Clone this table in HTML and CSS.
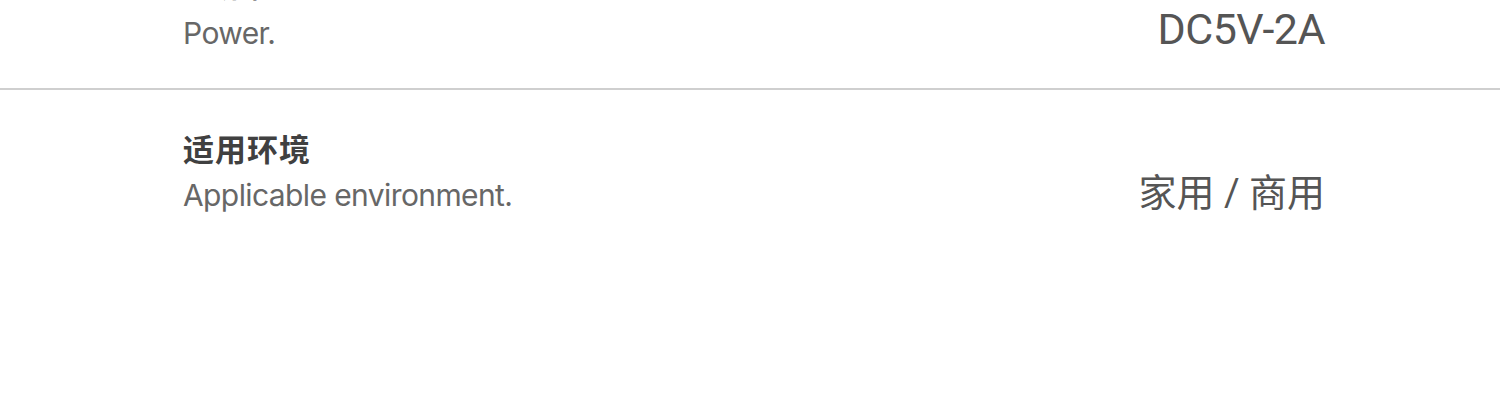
FILE: index.html
```html
<!DOCTYPE html>
<html lang="zh-CN">
<head>
  <meta charset="UTF-8">
  <title>产品参数</title>
  <meta name="viewport" content="width=device-width, initial-scale=1.0">
  <link rel="stylesheet" href="styles.css">
</head>
<body>
  <div class="specs">
    <div class="spec-row">
      <div class="spec-title">电源输入</div>
      <div class="spec-sub">Power.</div>
      <div class="spec-value">DC5V-2A</div>
    </div>
    <div class="spec-row">
      <div class="spec-title">适用环境</div>
      <div class="spec-sub">Applicable environment.</div>
      <div class="spec-value cn">家用 / 商用</div>
    </div>
  </div>
</body>
</html>
```

FILE: styles.css
```css
body {
  margin: 0;
  background: #fff;
  font-family: Inter, "Noto Sans CJK SC", sans-serif;
  overflow: hidden;
}

.specs {
  margin-top: -74px;
}

.spec-row {
  display: grid;
  grid-template-columns: 1fr auto;
  row-gap: 9px;
  align-items: baseline;
  padding: 40px 175px 37px 183px;
  border-bottom: 2px solid #cfcfcf;
}

.spec-row:last-child {
  border-bottom: none;
}

.spec-title {
  grid-column: 1;
  font-family: "Noto Sans CJK SC", sans-serif;
  font-size: 31px;
  line-height: 36px;
  font-weight: 700;
  color: #404040;
  letter-spacing: 1px;
}

.spec-sub {
  grid-column: 1;
  grid-row: 2;
  font-size: 30px;
  line-height: 36px;
  color: #676767;
  letter-spacing: -0.6px;
}

.spec-value {
  grid-column: 2;
  grid-row: 2;
  font-family: Roboto, "Noto Sans CJK SC", sans-serif;
  font-size: 43px;
  line-height: 36px;
  color: #555;
  letter-spacing: -0.5px;
}

.spec-value.cn {
  font-size: 38px;
  letter-spacing: 0;
}
```
